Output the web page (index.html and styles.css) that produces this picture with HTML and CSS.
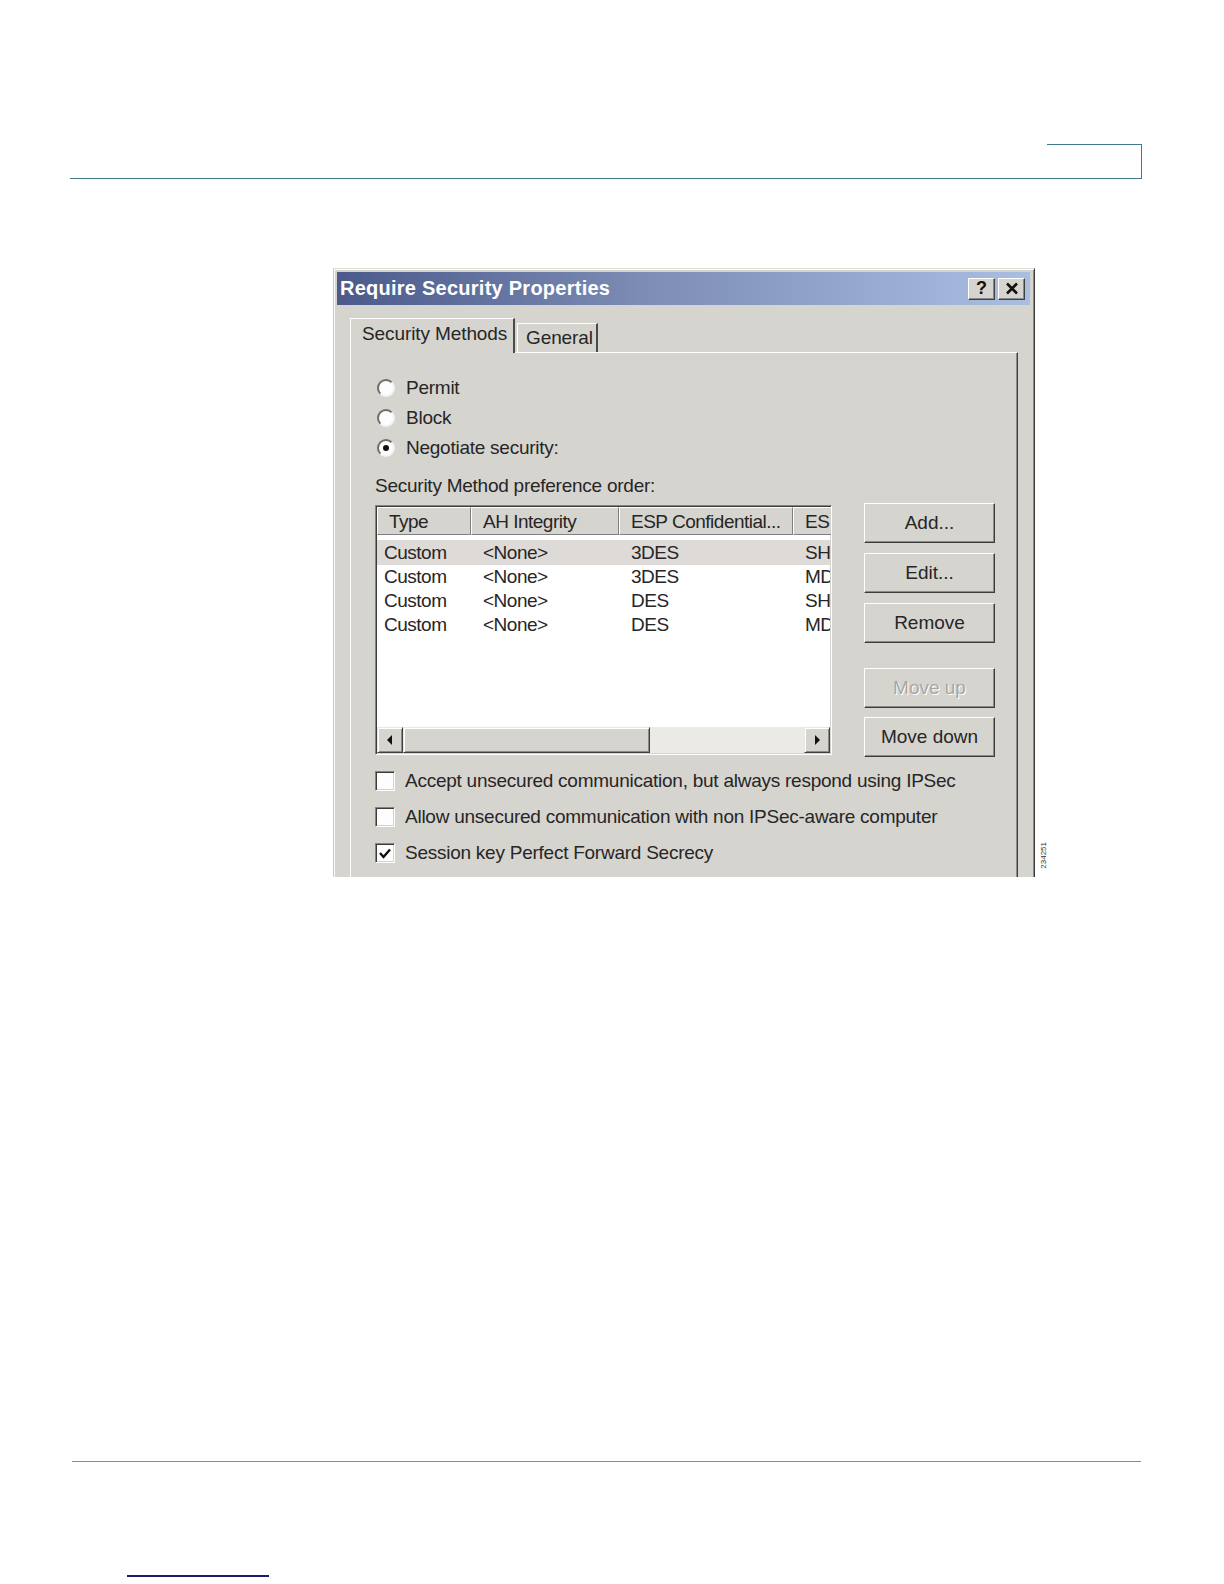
FILE: index.html
```html
<!DOCTYPE html>
<html>
<head>
<meta charset="utf-8">
<title>Require Security Properties</title>
<link rel="stylesheet" href="styles.css">
</head>
<body>
<div class="page">
  <header class="running-head"><div class="head-tab"></div></header>

  <figure class="figure">
    <div class="dialog">
      <div class="titlebar">
        <span class="title">Require Security Properties</span>
        <div class="title-btns">
          <span class="tbtn">?</span>
          <span class="tbtn">
            <svg width="14" height="13" viewBox="0 0 14 13"><path d="M2 1.5 L12 11.5 M12 1.5 L2 11.5" stroke="#111" stroke-width="2.6" fill="none"/></svg>
          </span>
        </div>
      </div>

      <div class="dialog-body">
        <div class="tabs">
          <div class="tab active">Security Methods</div>
          <div class="tab">General</div>
        </div>

        <div class="panel">
          <div class="opt"><span class="radio"></span><span>Permit</span></div>
          <div class="opt"><span class="radio"></span><span>Block</span></div>
          <div class="opt"><span class="radio on"></span><span>Negotiate security:</span></div>

          <div class="label">Security Method preference order:</div>

          <div class="list-row">
            <div class="listview">
              <div class="lv-head">
                <span class="hc c1">Type</span>
                <span class="hc c2">AH Integrity</span>
                <span class="hc c3">ESP Confidential...</span>
                <span class="hc c4">ES</span>
              </div>
              <div class="lv-rows">
                <div class="lv-row sel"><span class="dc c1">Custom</span><span class="dc c2">&lt;None&gt;</span><span class="dc c3">3DES</span><span class="dc c4">SH</span></div>
                <div class="lv-row"><span class="dc c1">Custom</span><span class="dc c2">&lt;None&gt;</span><span class="dc c3">3DES</span><span class="dc c4">MD</span></div>
                <div class="lv-row"><span class="dc c1">Custom</span><span class="dc c2">&lt;None&gt;</span><span class="dc c3">DES</span><span class="dc c4">SH</span></div>
                <div class="lv-row"><span class="dc c1">Custom</span><span class="dc c2">&lt;None&gt;</span><span class="dc c3">DES</span><span class="dc c4">MD</span></div>
              </div>
              <div class="hscroll">
                <span class="sbtn"><svg width="8" height="10" viewBox="0 0 8 10"><path d="M6 0 L1 5 L6 10 Z" fill="#111"/></svg></span>
                <span class="thumb"></span>
                <span class="track"></span>
                <span class="sbtn"><svg width="8" height="10" viewBox="0 0 8 10"><path d="M2 0 L7 5 L2 10 Z" fill="#111"/></svg></span>
              </div>
            </div>

            <div class="btn-col">
              <div class="btn b-add">Add...</div>
              <div class="btn b-edit">Edit...</div>
              <div class="btn b-remove">Remove</div>
              <div class="btn b-up disabled">Move up</div>
              <div class="btn b-down">Move down</div>
            </div>
          </div>

          <div class="checks">
            <div class="chk-row"><span class="chk"></span><span>Accept unsecured communication, but always respond using IPSec</span></div>
            <div class="chk-row"><span class="chk"></span><span>Allow unsecured communication with non IPSec-aware computer</span></div>
            <div class="chk-row"><span class="chk"><svg width="14" height="13" viewBox="0 0 14 13"><path d="M2 6 L5.5 10 L12 2.5" stroke="#111" stroke-width="2.4" fill="none"/></svg></span><span>Session key Perfect Forward Secrecy</span></div>
          </div>
        </div>
      </div>
    </div>
    <div class="fig-id">234251</div>
  </figure>

  <footer class="foot">
    <div class="foot-rule"></div>
    <div class="foot-link"></div>
  </footer>
</div>
</body>
</html>
```

FILE: styles.css
```css
html, body {
  margin: 0;
  padding: 0;
  background: #ffffff;
}

.page {
  width: 1224px;
  height: 1584px;
  overflow: hidden;
  background: #ffffff;
  font-family: "Liberation Sans", Arial, sans-serif;
}

/* running header */
.running-head {
  margin: 144px 82px 0 70px;
  height: 34px;
  border-bottom: 1px solid #3f7b8b;
  display: flex;
  justify-content: flex-end;
}

.head-tab {
  width: 95px;
  height: 34px;
  box-sizing: border-box;
  border-top: 1px solid #3f7b8b;
  border-right: 1px solid #3f7b8b;
}

/* figure */
.figure {
  margin: 89px 0 0 333px;
  display: flex;
  align-items: flex-end;
}

.dialog {
  width: 702px;
  height: 609px;
  box-sizing: border-box;
  overflow: hidden;
  background: #d6d4cf;
  border-top: 1px solid #e2e0dc;
  border-left: 1px solid #c8c6c2;
  border-right: 1px solid #3c3c3c;
  padding: 3px 4px 0 3px;
  box-shadow: inset 1px 1px 0 #fbfbfb, inset -1px 0 0 #8a8a8a;
  color: #262626;
  font-size: 19px;
  letter-spacing: -0.25px;
}

.titlebar {
  height: 33px;
  display: flex;
  align-items: center;
  justify-content: space-between;
  padding: 0 5px 0 3px;
  background: linear-gradient(to right, #4b5a8b 0%, #7d8db5 45%, #aabee2 100%);
}

.title {
  color: #ffffff;
  font-weight: bold;
  font-size: 20px;
  letter-spacing: 0.25px;
}

.title-btns {
  display: flex;
  gap: 3px;
}

.tbtn {
  width: 27px;
  height: 22px;
  box-sizing: border-box;
  display: flex;
  align-items: center;
  justify-content: center;
  background: #d6d4cf;
  border: 1px solid;
  border-color: #ffffff #404040 #404040 #ffffff;
  box-shadow: inset -1px -1px 0 #8a8a8a;
  color: #111;
  font-weight: bold;
  font-size: 18px;
  letter-spacing: 0;
}

.dialog-body {
  padding: 13px 12px 0 13px;
}

/* tabs */
.tabs {
  display: flex;
  align-items: flex-end;
  height: 34px;
}

.tab {
  box-sizing: border-box;
  height: 29px;
  padding: 3px 0 0 8px;
  border-top: 1px solid #ffffff;
  border-left: 1px solid #ffffff;
  border-right: 2px solid #4a4a4a;
  width: 81px;
  margin-left: 2px;
  font-size: 19px;
  letter-spacing: -0.1px;
}

.tab.active {
  width: 165px;
  height: 35px;
  margin-left: 0;
  margin-bottom: -1px;
  padding: 4px 0 0 11px;
  background: #d6d4cf;
  position: relative;
  z-index: 1;
}

.panel {
  box-sizing: border-box;
  height: 600px;
  border-top: 1px solid #ffffff;
  border-left: 1px solid #ffffff;
  border-right: 1px solid #404040;
  box-shadow: inset -1px 0 0 #8a8a8a;
  padding: 20px 0 0 24px;
}

.opt {
  display: flex;
  align-items: center;
  height: 30px;
}

.radio {
  width: 18px;
  height: 18px;
  box-sizing: border-box;
  margin: 0 11px 0 2px;
  border-radius: 50%;
  background: #fdfdfd;
  border: 2px solid;
  border-color: #6e6e6e #f2f2f2 #f2f2f2 #6e6e6e;
  display: flex;
  align-items: center;
  justify-content: center;
}

.radio.on::after {
  content: "";
  width: 6px;
  height: 6px;
  border-radius: 50%;
  background: #111;
}

.label {
  margin-top: 11px;
  height: 24px;
  line-height: 24px;
}

/* list + buttons */
.list-row {
  display: flex;
  align-items: flex-start;
  margin-top: 7px;
}

.listview {
  width: 457px;
  height: 250px;
  box-sizing: border-box;
  background: #ffffff;
  border: 1px solid;
  border-color: #848484 #ffffff #ffffff #848484;
  box-shadow: inset 1px 1px 0 #3c3c3c, inset -1px -1px 0 #d4d2cd;
  padding: 1px;
  display: flex;
  flex-direction: column;
  overflow: hidden;
  letter-spacing: -0.5px;
}

.lv-head {
  display: flex;
  height: 28px;
  flex: none;
}

.hc {
  box-sizing: border-box;
  height: 28px;
  line-height: 27px;
  background: #d6d4cf;
  border-top: 1px solid #ffffff;
  border-left: 1px solid #ffffff;
  border-right: 1px solid #808080;
  border-bottom: 1px solid #808080;
  padding-left: 11px;
  white-space: nowrap;
  overflow: hidden;
  flex: none;
}

.c1 { width: 94px; }
.c2 { width: 148px; }
.c3 { width: 174px; }
.c4 { width: 60px; }

.lv-rows {
  flex: 1;
  padding-top: 5px;
  overflow: hidden;
}

.lv-row {
  display: flex;
  height: 24px;
  line-height: 25px;
  white-space: nowrap;
}

.lv-row.sel {
  background: #dedad8;
  height: 25px;
  margin-bottom: -1px;
}

.dc {
  flex: none;
  box-sizing: border-box;
  padding-left: 12px;
  overflow: hidden;
}

.dc.c1 { padding-left: 7px; }

.hscroll {
  flex: none;
  height: 26px;
  display: flex;
}

.sbtn, .thumb {
  box-sizing: border-box;
  height: 26px;
  background: #d6d4cf;
  border: 1px solid;
  border-color: #e9e8e4 #404040 #404040 #e9e8e4;
  box-shadow: inset 1px 1px 0 #ffffff, inset -1px -1px 0 #8a8a8a;
}

.sbtn {
  width: 26px;
  display: flex;
  align-items: center;
  justify-content: center;
}

.thumb {
  width: 247px;
}

.track {
  flex: 1;
  background: #ebeae6;
}

.btn-col {
  display: flex;
  flex-direction: column;
  margin-left: 32px;
  margin-top: -2px;
  width: 131px;
}

.btn {
  box-sizing: border-box;
  height: 40px;
  display: flex;
  align-items: center;
  justify-content: center;
  background: #d6d4cf;
  border: 1px solid;
  border-color: #ffffff #3c3c3c #3c3c3c #ffffff;
  box-shadow: inset -1px -1px 0 #8a8a8a;
  letter-spacing: 0;
}

.b-edit, .b-remove { margin-top: 10px; }
.b-up { margin-top: 25px; }
.b-down { margin-top: 9px; }

.btn.disabled {
  color: #a9a7a3;
  text-shadow: 1px 1px 0 #ffffff;
}

/* checkboxes */
.checks {
  margin-top: 6px;
}

.chk-row {
  display: flex;
  align-items: center;
  height: 36px;
  white-space: nowrap;
}

.chk {
  width: 20px;
  height: 20px;
  box-sizing: border-box;
  margin-right: 10px;
  background: #fdfdfd;
  border: 1px solid;
  border-color: #848484 #ffffff #ffffff #848484;
  box-shadow: inset 1px 1px 0 #3c3c3c, inset -1px -1px 0 #d4d2cd;
  display: flex;
  align-items: center;
  justify-content: center;
}

.fig-id {
  writing-mode: vertical-rl;
  transform: rotate(180deg);
  font-size: 8px;
  color: #333;
  margin: 0 0 8px 4px;
  letter-spacing: 0;
}

/* footer */
.foot-rule {
  margin: 584px 83px 0 72px;
  border-top: 1px solid #8a8a8a;
}

.foot-link {
  margin: 113px 0 0 127px;
  width: 142px;
  height: 2px;
  background: #1b1b6b;
}
```
